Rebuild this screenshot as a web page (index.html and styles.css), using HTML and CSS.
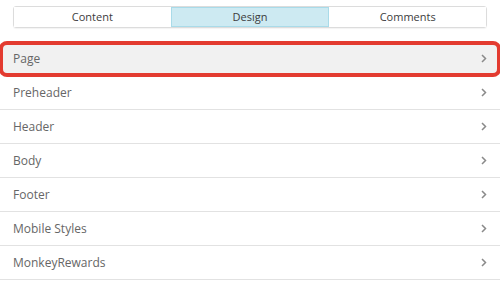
FILE: index.html
```html
<!DOCTYPE html>
<html lang="en">
<head>
    <meta charset="UTF-8">
    <meta name="viewport" content="width=device-width, initial-scale=1.0">
    <title>Design</title>
    <link rel="stylesheet" href="styles.css">
</head>
<body>
    <div class="tabs">
        <div class="tab">Content</div>
        <div class="tab active">Design</div>
        <div class="tab">Comments</div>
    </div>

    <!-- Secciones de diseño -->
    <ul class="sections">
        <li class="section highlighted">Page <svg class="chevron" width="6" height="9" viewBox="0 0 6 9"><polyline points="1,1 4.5,4.5 1,8" /></svg></li>
        <li class="section">Preheader <svg class="chevron" width="6" height="9" viewBox="0 0 6 9"><polyline points="1,1 4.5,4.5 1,8" /></svg></li>
        <li class="section">Header <svg class="chevron" width="6" height="9" viewBox="0 0 6 9"><polyline points="1,1 4.5,4.5 1,8" /></svg></li>
        <li class="section">Body <svg class="chevron" width="6" height="9" viewBox="0 0 6 9"><polyline points="1,1 4.5,4.5 1,8" /></svg></li>
        <li class="section">Footer <svg class="chevron" width="6" height="9" viewBox="0 0 6 9"><polyline points="1,1 4.5,4.5 1,8" /></svg></li>
        <li class="section">Mobile Styles <svg class="chevron" width="6" height="9" viewBox="0 0 6 9"><polyline points="1,1 4.5,4.5 1,8" /></svg></li>
        <li class="section">MonkeyRewards <svg class="chevron" width="6" height="9" viewBox="0 0 6 9"><polyline points="1,1 4.5,4.5 1,8" /></svg></li>
    </ul>
</body>
</html>
```

FILE: styles.css
```css
/* Estilos generales */
body {
    font-family: "Open Sans", Arial, sans-serif;
    margin: 0;
    padding: 0;
    background-color: #fff;
}

.tabs {
    display: flex;
    margin: 6px 13px 0;
    border: 1px solid #dcdcdc;
    border-radius: 3px;
    box-shadow: 0 1px 1px rgba(0, 0, 0, 0.05);
}

.tab {
    flex: 1;
    height: 20px;
    line-height: 20px;
    text-align: center;
    font-size: 11px;
    color: #3c3c3c;
    background-color: #fff;
}

.tab + .tab {
    border-left: 1px solid #dcdcdc;
}

.tab.active {
    background-color: #cdeaf2;
    box-shadow: inset 0 1px 0 #a9dbe9, inset 0 -1px 0 #a9dbe9;
    border-left-color: #a9dbe9;
}

.tab.active + .tab {
    border-left-color: #a9dbe9;
}

/* Lista de secciones */
.sections {
    list-style: none;
    margin: 14px 0 0;
    padding: 0;
}

.section {
    display: flex;
    justify-content: space-between;
    align-items: center;
    height: 33px;
    padding: 0 13px;
    border-bottom: 1px solid #e2e2e2;
    font-size: 12px;
    color: #666;
}

.section.highlighted {
    background-color: #f1f1f1;
    outline: 4px solid #e33b30;
    outline-offset: -3px;
    border-radius: 7px;
}

.chevron polyline {
    fill: none;
    stroke: #8a8a8a;
    stroke-width: 1.5;
}
```
